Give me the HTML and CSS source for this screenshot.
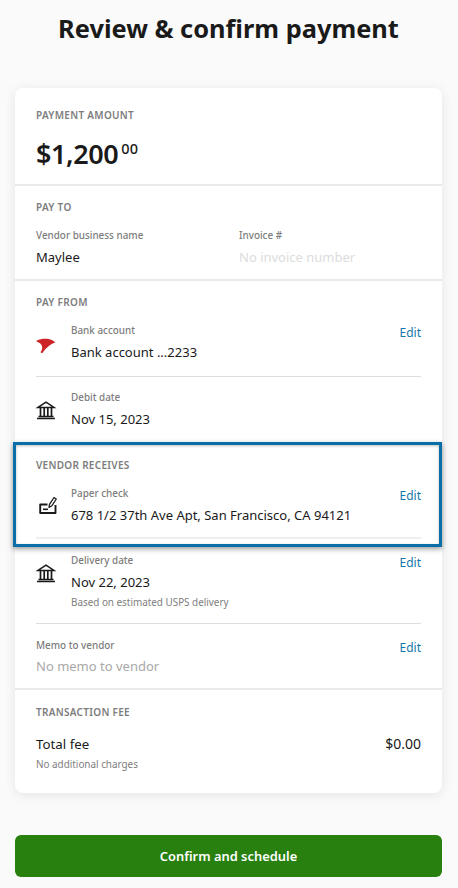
FILE: index.html
```html
<!DOCTYPE html>
<html lang="en">
<head>
<meta charset="utf-8">
<title>Review &amp; confirm payment</title>
<link rel="stylesheet" href="styles.css">
</head>
<body>
<main class="page">
  <h1 class="title">Review &amp; confirm payment</h1>
  <div class="card">
    <section class="section amount-section">
      <h2 class="label">PAYMENT AMOUNT</h2>
      <p class="amount">$1,200<sup class="cents">00</sup></p>
    </section>
    <section class="section payto">
      <h2 class="label">PAY TO</h2>
      <div class="cols">
        <div><div class="sub">Vendor business name</div><div class="value">Maylee</div></div>
        <div><div class="sub">Invoice #</div><div class="value faint">No invoice number</div></div>
      </div>
    </section>
    <section class="section payfrom">
      <h2 class="label">PAY FROM</h2>
      <div class="row first">
        <svg class="icon swoosh" viewBox="0 0 20 16"><path fill="#cc2427" d="M.7 2.600C4.700 .8 8.700 .6 12.300 1.100c3 .4 5.400 1.700 7 3.400-4 1-8.800 4.500-13 10.800l-1.900-1C7.700 10 6.700 5.600 .7 3.400Z"/></svg>
        <div class="body"><div class="sub">Bank account</div><div class="value">Bank account ...2233</div></div>
        <a class="edit">Edit</a>
      </div>
      <div class="row rule">
        <svg class="icon" viewBox="0 0 20 20"><use href="#bank"/></svg>
        <div class="body"><div class="sub">Debit date</div><div class="value">Nov 15, 2023</div></div>
      </div>
    </section>
    <section class="highlight">
      <h2 class="label">VENDOR RECEIVES</h2>
      <div class="row first">
        <svg class="icon check" viewBox="0 0 20 20" fill="none" stroke="#1a1a1a"><path stroke-width="1.900" stroke-linejoin="round" d="M11.500 9.500H4.200v8.500h15.300v-8"/><path stroke-width="1.600" d="M7 14.300h5"/><path stroke-width="1.300" stroke-linejoin="round" d="M13 12.500l.5-3.200L18 2.500l2.300 1.500-4.500 6.800Z"/></svg>
        <div class="body"><div class="sub">Paper check</div><div class="value">678 1/2 37th Ave Apt, San Francisco, CA 94121</div></div>
        <a class="edit">Edit</a>
      </div>
      <div class="inner-rule"></div>
    </section>
    <section class="section delivery">
      <div class="row">
        <svg class="icon" viewBox="0 0 20 20"><use href="#bank"/></svg>
        <div class="body"><div class="sub">Delivery date</div><div class="value">Nov 22, 2023</div><div class="note">Based on estimated USPS delivery</div></div>
        <a class="edit">Edit</a>
      </div>
      <div class="row memo">
        <div class="body"><div class="sub">Memo to vendor</div><div class="value memo-value">No memo to vendor</div></div>
        <a class="edit">Edit</a>
      </div>
    </section>
    <section class="section fee">
      <h2 class="label">TRANSACTION FEE</h2>
      <div class="fee-row"><span>Total fee</span><span class="fee-amount">$0.00</span></div>
      <div class="note">No additional charges</div>
    </section>
  </div>
  <button class="confirm" type="button">Confirm and schedule</button>
</main>
<svg class="defs" width="0" height="0"><defs><g id="bank" fill="none" stroke="#1a1a1a" stroke-width="1.500"><path d="M2 7.400 10 2.200l8 5.200Z"/><path d="M4.500 8v8M8.200 8v8M11.800 8v8M15.500 8v8" stroke-width="1.700"/><path d="M2.500 16.400h15M1 18.400h18"/></g></defs></svg>
</body>
</html>
```
FILE: styles.css
```css
* { box-sizing: border-box; }
html, body { margin: 0; padding: 0; }
body {
  background: #fafafa;
  color: #1a1a1a;
  font-family: "Noto Sans", "Open Sans", sans-serif;
  height: 888px;
  overflow: hidden;
}
.page { padding: 0 16px 0 15px; }
.defs { position: absolute; }
.title {
  margin: 0;
  padding-top: 10px;
  height: 88px;
  text-align: center;
  font-size: 25.4px;
  line-height: 36px;
  font-weight: 700;
  color: #1a1a1a;
}
.card {
  background: #fff;
  border-radius: 8px;
  box-shadow: 0 2px 12px rgba(0,0,0,.09);
  height: 705px;
}
.section { padding: 0 21px; border-bottom: 2px solid #e9e9e9; }
.section:last-child { border-bottom: 0; }
.label {
  margin: 0;
  font-size: 10px;
  line-height: 14px;
  font-weight: 600;
  letter-spacing: .3px;
  color: #7d7d7d;
}
.amount-section { height: 98px; padding-top: 20px; }
.amount {
  margin: 14px 0 0;
  font-size: 27px;
  line-height: 36px;
  font-weight: 600;
  letter-spacing: -.4px;
}
.cents {
  font-size: 14.5px;
  line-height: 0;
  font-weight: 500;
  vertical-align: 10px;
  margin-left: 3px;
  letter-spacing: 0;
}
.sub {
  font-size: 9.9px;
  line-height: 14px;
  font-weight: 500;
  color: #7d7d7d;
}
.value {
  margin-top: 5px;
  font-size: 13px;
  line-height: 20px;
  color: #1a1a1a;
}
.faint { color: #dcdcdc; }
.memo-value { color: #a8a8a8; margin-top: 4px; }
.note {
  margin-top: 3px;
  font-size: 9.9px;
  line-height: 14px;
  color: #7d7d7d;
}
.payto { height: 95px; padding-top: 14px; }
.cols { display: grid; grid-template-columns: 203px 1fr; margin-top: 14px; }
.payfrom { height: 161px; padding-top: 14px; border-bottom: 0; }
.row { display: flex; align-items: flex-start; }
.row.first { margin-top: 14px; }
.rule { border-top: 1px solid #dedede; margin-top: 14px; padding-top: 13px; }
.icon { flex: none; width: 20px; height: 20px; margin-right: 15px; margin-top: 10px; overflow: visible; }
.swoosh { margin-top: 13px; }
.check { margin-top: 9px; }
.body { flex: 1; min-width: 0; }
.edit { font-size: 12px; line-height: 16px; color: #1478a8; margin-top: 2px; }
.highlight {
  position: relative;
  margin: 0 0 0 -2px;
  height: 105px;
  padding: 13px 18px 0 20px;
  border: 3px solid #0a6fa8;
  box-shadow: 0 2px 5px rgba(0,0,0,.4), inset 0 1px 3px rgba(0,0,0,.25);
  background: #fff;
}
.inner-rule { height: 2px; background: #eeeeee; margin-top: 12px; }
.delivery { height: 143px; padding-top: 6px; }
.memo { border-top: 1px solid #dedede; margin-top: 14px; padding-top: 14px; }
.fee { padding-top: 15px; }
.fee-row {
  display: flex;
  justify-content: space-between;
  margin-top: 15px;
  font-size: 13.3px;
  line-height: 20px;
}
.fee-amount { font-size: 14px; }
.confirm {
  display: block;
  width: 100%;
  height: 42px;
  margin-top: 42px;
  border: 0;
  border-radius: 6px;
  background: #28800f;
  color: #fff;
  font-family: inherit;
  font-size: 12.9px;
  font-weight: 600;
}
```
